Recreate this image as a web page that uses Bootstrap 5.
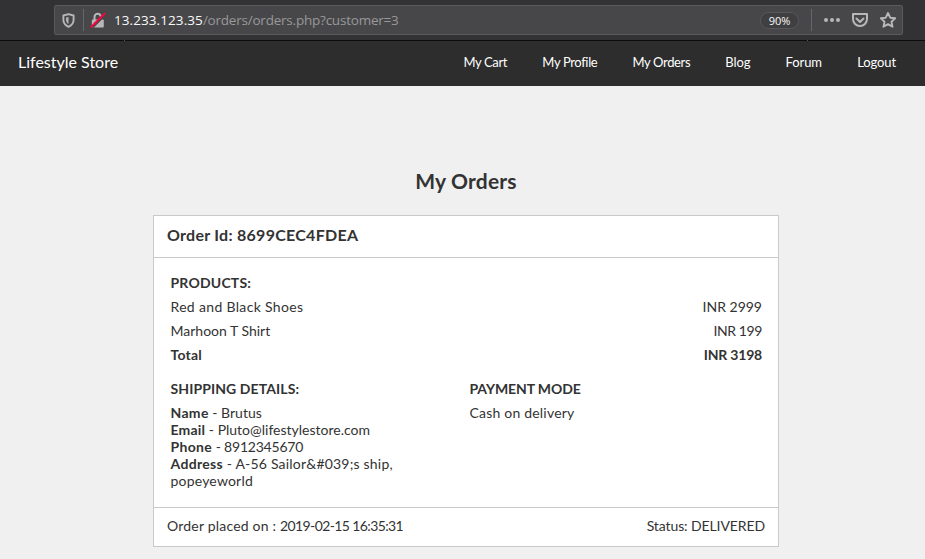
<!DOCTYPE html>
<html lang="en">
<head>
<meta charset="utf-8">
<meta name="viewport" content="width=device-width, initial-scale=1">
<title>Lifestyle Store - My Orders</title>
<link href="https://cdn.jsdelivr.net/npm/bootstrap@5.3.0/dist/css/bootstrap.min.css" rel="stylesheet">
<style>
body{background:#f0f0f0;color:#333;font-family:Lato,"Open Sans",sans-serif;font-size:14px;line-height:17px;height:559px;overflow:hidden}
.toolbar{height:41px;padding:5px 22px 6px 54px;background:linear-gradient(#55555a,#55555a) 124px 40px/1px 1px no-repeat,linear-gradient(#55555a,#55555a) 807px 40px/1px 1px no-repeat,linear-gradient(#0c0c0d,#0c0c0d) 0 40px/100% 1px no-repeat,#323234}
.urlbar{height:30px;background:#474749;border:1px solid #5a5a5c;border-radius:2px;font-family:"Open Sans","Noto Sans",sans-serif}
.urlbar svg{display:block;flex:none}
.shield{margin-left:7px}
.lock{margin-left:6px}
.sep{width:1px;height:22px;background:#66666b}
.address{font-size:13.5px;color:#98989a;margin-left:8px;padding-top:1px;letter-spacing:-.22px}
.address span{color:#f9f9fa;letter-spacing:.08px}
.zoom-pill{width:39px;height:17px;border:1px solid #58585b;border-radius:9px;background:#3f3f41;color:#f9f9fa;font-size:11px;line-height:16px}
.sep-right{margin:0 8px 0 12px}
.site-nav{height:45px;background:#2d2d2d;padding:0 29px 3px 18px}
.site-nav .navbar-brand{font-size:16px;line-height:20px;color:#fff}
.site-nav .nav-link{font-size:13px;line-height:18px;color:#fff;letter-spacing:-.1px}
.site-nav .navbar-nav{gap:35.2px}
.site-nav .nav-link.snug{letter-spacing:-.36px}
.page-title{font-size:21px;line-height:26px;font-weight:700;margin:82px 0 21px;padding-left:7px;letter-spacing:.2px}
.order{width:626px;height:332px;margin-left:153px;border:1px solid #c9c9c9;border-radius:0;color:#333}
.order .card-header,.order .card-footer{background:#fff;border-color:#c9c9c9;border-radius:0;padding:0 13px 3px}
.order .card-header{height:42px;font-size:16px;font-weight:700;padding-bottom:4px;letter-spacing:.27px}
.order .card-footer{height:39px}
.order .card-body{padding:13px 16px 0 16.5px}
.order h2{font-size:14px;line-height:24px;font-weight:700;margin:0}
.line-item{height:24px;line-height:24px}
.details{margin-top:10px}
.details .shipping{width:299px}
.details p{margin:3px 0 0}
.track-1{letter-spacing:.1px}
.track-2{letter-spacing:.2px}
.track-3{letter-spacing:.33px}
.tight-1{letter-spacing:-.1px}
.tight-2{letter-spacing:-.21px}
.tight-3{letter-spacing:-.4px}
.tight-4{letter-spacing:-.61px}
</style>
</head>
<body>
<header class="toolbar">
  <div class="urlbar d-flex align-items-center">
    <svg class="shield" width="13" height="15" viewBox="0 0 13 15"><path d="M6.500 1.200 11.600 2.500V7c0 3.200-2 5.400-5.100 6.800C3.400 12.400 1.400 10.200 1.400 7V2.500Z" fill="none" stroke="#b7b7b9" stroke-width="1.900" stroke-linejoin="round"/><path d="M6.500 4v7C4.800 9.900 4.100 8.700 4.100 7V4.500Z" fill="#b7b7b9"/></svg>
    <span class="sep ms-2"></span>
    <svg class="lock" width="16" height="17" viewBox="0 0 16 17"><path d="M4.500 8V5a3.200 3.200 0 0 1 6.400 0v3" fill="none" stroke="#b7b7b9" stroke-width="2"/><rect x="1.800" y="7.500" width="12" height="8" rx="1" fill="#b7b7b9"/><path d="M2.500 15.500 14.500 3.500" stroke="#474749" stroke-width="2"/><path d="M1.500 14.700 14.500 1.700" stroke="#f5053f" stroke-width="2.200" stroke-linecap="round"/></svg>
    <div class="address text-nowrap"><span>13.233.123.35</span>/orders/orders.php?customer=3</div>
    <span class="zoom-pill text-center ms-auto">90%</span>
    <span class="sep sep-right"></span>
    <svg width="82" height="20" viewBox="0 0 82 20"><g fill="#b7b7b9"><circle cx="6" cy="10" r="2"/><circle cx="12" cy="10" r="2"/><circle cx="18" cy="10" r="2"/></g><g fill="none" stroke="#b7b7b9" stroke-width="2" stroke-linejoin="round"><path d="M33 4H47V9a7 7 0 0 1-14 0Z"/><path d="M36.500 8.500 40 12l3.500-3.500" stroke-linecap="round"/><path stroke-width="1.900" d="m68 3 2.200 4.700 5 .6-3.700 3.400 1 5-4.500-2.500-4.500 2.500 1-5-3.700-3.400 5-.6Z"/></g></svg>
  </div>
</header>
<nav class="site-nav navbar navbar-expand d-flex">
  <a class="navbar-brand p-0 m-0" href="#">Lifestyle Store</a>
  <div class="navbar-nav ms-auto">
    <a class="nav-link snug p-0" href="#">My Cart</a>
    <a class="nav-link snug p-0" href="#">My Profile</a>
    <a class="nav-link snug p-0" href="#">My Orders</a>
    <a class="nav-link p-0" href="#">Blog</a>
    <a class="nav-link p-0" href="#">Forum</a>
    <a class="nav-link p-0" href="#">Logout</a>
  </div>
</nav>
<main>
  <h1 class="page-title text-center">My Orders</h1>
  <section class="order card">
    <div class="card-header d-flex align-items-center">Order Id: 8699CEC4FDEA</div>
    <div class="card-body">
      <h2 class="track-2">PRODUCTS:</h2>
      <div class="line-item d-flex justify-content-between"><span class="track-3">Red and Black Shoes</span><span>INR 2999</span></div>
      <div class="line-item d-flex justify-content-between"><span>Marhoon T Shirt</span><span class="tight-3">INR 199</span></div>
      <div class="line-item d-flex justify-content-between fw-bold"><span class="track-2">Total</span><span class="tight-2">INR 3198</span></div>
      <div class="details d-flex">
        <div class="shipping">
          <h2 class="track-1">SHIPPING DETAILS:</h2>
          <p><b class="track-3">Name</b> - Brutus<br><b class="track-2">Email</b> - Pluto@lifestylestore.com<br><b class="track-3">Phone</b> <span class="tight-2">- 8912345670</span><br><b class="track-3">Address</b> <span class="track-2">- A-56 Sailor&amp;#039;s ship,</span><br><span class="track-2">popeyeworld</span></p>
        </div>
        <div>
          <h2 class="tight-1">PAYMENT MODE</h2>
          <p class="track-2">Cash on delivery</p>
        </div>
      </div>
    </div>
    <div class="card-footer d-flex align-items-center justify-content-between"><span><span class="track-2">Order placed on : </span><span class="tight-4">2019-02-15 16:35:31</span></span><span class="tight-1">Status: DELIVERED</span></div>
  </section>
</main>
<script src="https://cdn.jsdelivr.net/npm/bootstrap@5.3.0/dist/js/bootstrap.bundle.min.js"></script>
</body>
</html>
